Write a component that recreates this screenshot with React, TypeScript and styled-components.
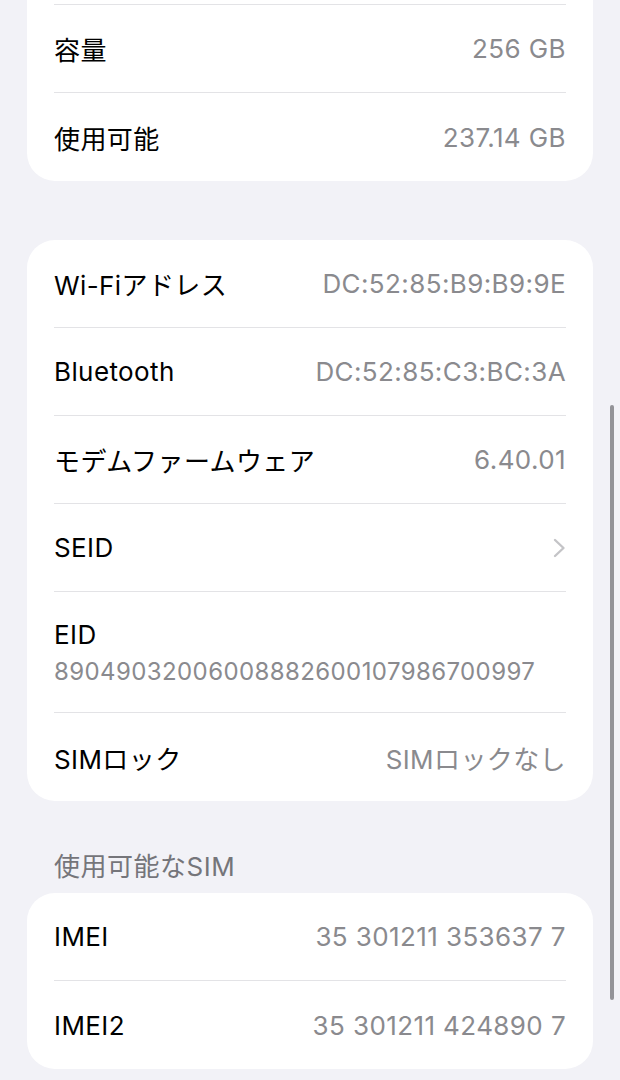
import React from "react";
import styled, { createGlobalStyle } from "styled-components";

const Global = createGlobalStyle`
  html, body { margin: 0; padding: 0; background: #f2f2f7; }
  body { overflow: hidden; }
  * { box-sizing: border-box; }
`;

const Page = styled.div`
  position: relative;
  width: 620px;
  height: 1080px;
  overflow: hidden;
  background: #f2f2f7;
  font-family: Inter, "Noto Sans CJK JP", sans-serif;
  padding: 0 27px;
  display: flex;
  flex-direction: column;
`;

const Card = styled.div<{ $mt?: number }>`
  background: #ffffff;
  border-radius: 28px;
  margin-top: ${(p) => p.$mt ?? 0}px;
  padding: 0 27px;
  display: flex;
  flex-direction: column;
`;

const Row = styled.div<{ $last?: boolean }>`
  height: 88px;
  display: flex;
  align-items: center;
  justify-content: space-between;
  border-bottom: ${(p) => (p.$last ? "none" : "1px solid #e3e3e6")};
`;

const StackRow = styled.div`
  height: 121px;
  display: flex;
  flex-direction: column;
  justify-content: center;
  gap: 7px;
  border-bottom: 1px solid #e3e3e6;
`;

const Label = styled.span`
  font-size: 26px;
  color: #000;
  letter-spacing: 0.4px;
`;

const Value = styled.span<{ $size?: number }>`
  font-size: ${(p) => p.$size ?? 26}px;
  color: #8a8a8e;
  letter-spacing: 0.4px;
`;

const Header = styled.div`
  margin-top: 47px;
  padding: 0 27px;
  height: 32px;
  display: flex;
  align-items: center;
  font-size: 26px;
  letter-spacing: 0.5px;
  color: #75757a;
  margin-bottom: 13px;
`;

const Scroll = styled.div`
  position: absolute;
  right: 6px;
  top: 405px;
  width: 4px;
  height: 595px;
  border-radius: 2px;
  background: #939398;
`;

const Chevron = () => (
  <svg width="13" height="20" viewBox="0 0 13 20">
    <path d="M2 2 L10.5 10 L2 18" fill="none" stroke="#c4c4c7" strokeWidth="2.4" strokeLinecap="round" strokeLinejoin="round" />
  </svg>
);

export default function App() {
  return (
    <>
      <Global />
      <Page>
        <Card $mt={-83}>
          <Row />
          <Row>
            <Label>容量</Label>
            <Value>256 GB</Value>
          </Row>
          <Row $last>
            <Label>使用可能</Label>
            <Value>237.14 GB</Value>
          </Row>
        </Card>

        <Card $mt={59}>
          <Row>
            <Label>Wi-Fiアドレス</Label>
            <Value>DC:52:85:B9:B9:9E</Value>
          </Row>
          <Row>
            <Label>Bluetooth</Label>
            <Value>DC:52:85:C3:BC:3A</Value>
          </Row>
          <Row>
            <Label>モデムファームウェア</Label>
            <Value>6.40.01</Value>
          </Row>
          <Row>
            <Label>SEID</Label>
            <Chevron />
          </Row>
          <StackRow>
            <Label>EID</Label>
            <Value $size={24}>89049032006008882600107986700997</Value>
          </StackRow>
          <Row $last>
            <Label>SIMロック</Label>
            <Value>SIMロックなし</Value>
          </Row>
        </Card>

        <Header>使用可能なSIM</Header>

        <Card>
          <Row>
            <Label>IMEI</Label>
            <Value>35 301211 353637 7</Value>
          </Row>
          <Row $last>
            <Label>IMEI2</Label>
            <Value>35 301211 424890 7</Value>
          </Row>
        </Card>
        <Scroll />
      </Page>
    </>
  );
}
